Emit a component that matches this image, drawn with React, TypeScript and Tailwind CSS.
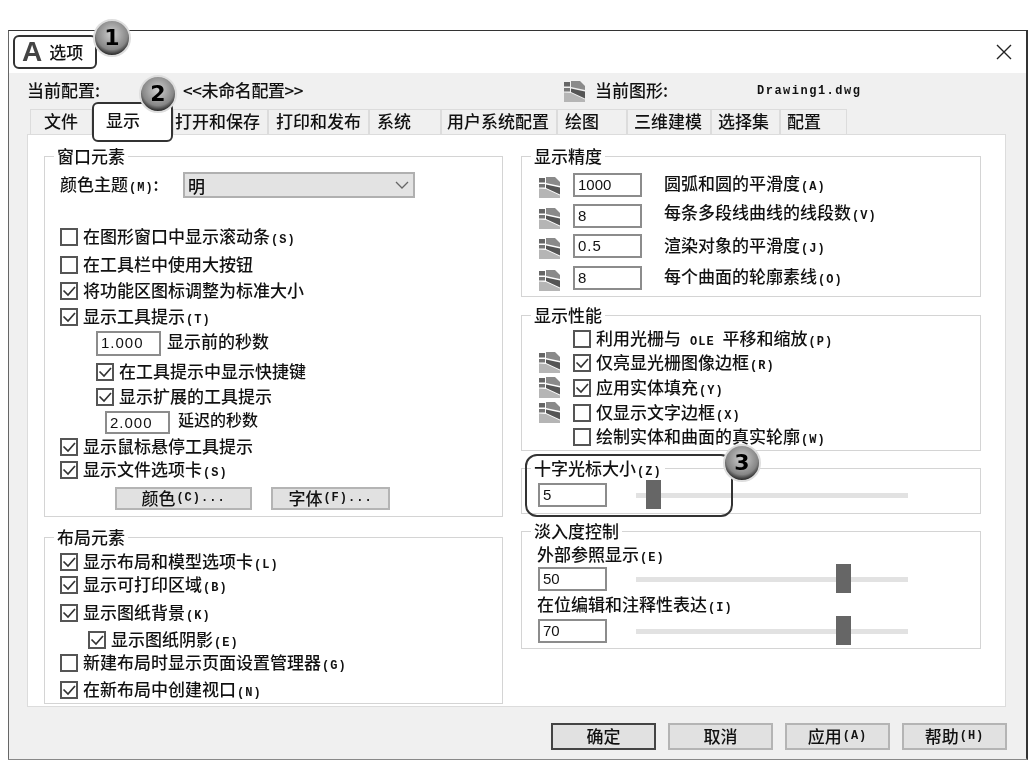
import type { ReactNode } from 'react';

const cjk = "font-['Noto_Sans_CJK_SC','Liberation_Sans',sans-serif]";

function Hot({ children }: { children: ReactNode }) {
  return <span className="font-['Liberation_Mono',monospace] text-[12px] font-bold tracking-[1px] ml-px">{children}</span>;
}

function LayerIcon({ className = '' }: { className?: string }) {
  return (
    <svg viewBox="0 0 21 21" className={`w-[21px] h-[21px] shrink-0 ${className}`}>
      <path d="M0 1h6v4.5H0z" fill="#666" />
      <path d="M7 0h9l5 5v4L7 6z" fill="#8a8a8a" />
      <path d="M0 7h6v3.5H0z" fill="#777" />
      <path d="M7 7.5l14 3v7L7 11z" fill="#555" />
      <path d="M0 11.5l7 .5 14 6.5V21H0z" fill="#b5b5b5" />
    </svg>
  );
}

function Group({ title, className, children }: { title: ReactNode; className: string; children: ReactNode }) {
  return (
    <section className={`relative border border-[#d4d4d4] ${className}`}>
      <span className="absolute -top-[11px] left-[9px] bg-white px-[3px] leading-[20px] whitespace-nowrap">{title}</span>
      {children}
    </section>
  );
}

function Check({ on, className = '', children }: { on?: boolean; className?: string; children: ReactNode }) {
  return (
    <div className={`flex items-center h-[23px] ${className}`}>
      <span className="w-[18px] h-[18px] border-2 border-[#555] bg-white flex items-center justify-center shrink-0">
        {on && (
          <svg viewBox="0 0 14 14" className="w-[14px] h-[14px]">
            <path d="M1.5 6.5l4.5 4.5 7-8" fill="none" stroke="#333" strokeWidth="1.7" />
          </svg>
        )}
      </span>
      <span className="ml-[5px] -mt-[2px] whitespace-nowrap">{children}</span>
    </div>
  );
}

function Field({ value, className }: { value: string; className: string }) {
  return (
    <div className={`border-2 border-[#8c8c8c] bg-white pl-[3px] text-[15px] leading-[20px] font-['Liberation_Sans',sans-serif] shrink-0 ${className}`}>
      {value}
    </div>
  );
}

function Slider({ thumb }: { thumb: string }) {
  return (
    <div className="relative ml-[29px] w-[272px] h-[24px] flex items-center">
      <div className="w-full h-[5px] bg-[#e2e2e2]" />
      <div className={`absolute top-[-3px] w-[15px] h-[29px] bg-[#666] ${thumb}`} />
    </div>
  );
}

function Badge({ n, className }: { n: number; className: string }) {
  return (
    <div className={`absolute z-20 w-[38px] h-[38px] rounded-full border-2 border-[#dedede] bg-[radial-gradient(circle_at_50%_38%,#cfcfcf,#868686_58%,#1c1c1c_80%)] flex items-center justify-center text-[22px] font-bold text-black font-['DejaVu_Sans',sans-serif] leading-none ${className}`}>
      {n}
    </div>
  );
}

function Tab({ w, pl, children }: { w: string; pl: string; children: ReactNode }) {
  return (
    <div className={`${w} ${pl} h-[25px] border border-b-0 border-[#dcdcdc] bg-[#f0f0f0] leading-[22px] whitespace-nowrap`}>
      {children}
    </div>
  );
}

function DlgButton({ children, def }: { children: ReactNode; def?: boolean }) {
  return (
    <div className={`w-[105px] h-[27px] bg-[#e1e1e1] pb-[2px] flex items-center justify-center ${def ? 'border-2 border-[#444]' : 'border-2 border-[#b4b4b4]'}`}>
      {children}
    </div>
  );
}

export default function App() {
  return (
    <div className={`relative w-[1034px] h-[769px] bg-white pt-[30px] pl-[8px] text-[17px] font-medium text-[#111] overflow-hidden blur-[0.75px] ${cjk}`}>
      <div className="relative w-[1020px] h-[730px] border-t border-l border-r-2 border-b-2 border-t-[#333] border-l-[#666] border-r-[#333] border-b-[#888]">
        {/* Title bar */}
        <div className="h-[42px] flex items-center justify-between bg-white">
          <div className="flex items-center ml-[13px]">
            <span className="text-[28px] font-bold leading-none text-[#444] font-['Liberation_Sans',sans-serif]">A</span>
            <span className="ml-[7px] text-[17px]">选项</span>
          </div>
          <svg viewBox="0 0 16 16" className="w-[16px] h-[16px] mr-[14px]">
            <path d="M1 1l14 14M15 1L1 15" stroke="#222" strokeWidth="1.4" />
          </svg>
        </div>

        <div className="h-[686px] bg-[#f0f0f0]">
          {/* Current profile row */}
          <div className="h-[36px] flex items-center pl-[18px]">
            <span className="w-[156px] -mt-[3px]">当前配置:</span>
            <span className="w-[381px] -mt-[3px] whitespace-nowrap tracking-[-0.4px]">&lt;&lt;未命名配置&gt;&gt;</span>
            <LayerIcon />
            <span className="ml-[10px] w-[162px] -mt-[3px]">当前图形:</span>
            <span className="font-['Liberation_Mono',monospace] text-[12px] font-bold tracking-[1.5px] -mt-[1px]">Drawing1.dwg</span>
          </div>

          {/* Tabs */}
          <div className="flex ml-[21px] h-[25px]">
            <Tab w="w-[62px]" pl="pl-[13px]">文件</Tab>
            <div className="relative w-[81px] h-[25px] bg-white">
              <div className="absolute top-[-7px] left-0 w-[81px] h-[40px] pl-[12px] leading-[32px] bg-white border-2 border-[#333] rounded-[6px] z-10">显示</div>
            </div>
            <Tab w="w-[95px]" pl="pl-[1px]">打开和保存</Tab>
            <Tab w="w-[101px]" pl="pl-[7px]">打印和发布</Tab>
            <Tab w="w-[72px]" pl="pl-[7px]">系统</Tab>
            <Tab w="w-[116px]" pl="pl-[5px]">用户系统配置</Tab>
            <Tab w="w-[70px]" pl="pl-[7px]">绘图</Tab>
            <Tab w="w-[84px]" pl="pl-[6px]">三维建模</Tab>
            <Tab w="w-[69px]" pl="pl-[6px]">选择集</Tab>
            <Tab w="w-[67px]" pl="pl-[6px]">配置</Tab>
          </div>

          {/* Tab panel */}
          <div className="ml-[18px] w-[979px] h-[573px] bg-white border border-[#dcdcdc] pt-[21px] pl-[16px] flex gap-[18px]">
            <div className="w-[459px]">
              <Group title="窗口元素" className="h-[361px] pl-[15px]">
                <div className="flex items-center h-[26px] mt-[15px]">
                  <span className="w-[123px] -mt-[2px] whitespace-nowrap">颜色主题<Hot>(M)</Hot>:</span>
                  <div className="w-[232px] h-[26px] bg-[#e3e3e3] border-2 border-[#b0b0b0] pl-[3px] flex items-center justify-between leading-none">
                    <span>明</span>
                    <svg viewBox="0 0 14 8" className="w-[14px] h-[8px] mr-[4px]">
                      <path d="M1 1l6 6 6-6" fill="none" stroke="#666" strokeWidth="1.3" />
                    </svg>
                  </div>
                </div>
                <Check className="mt-[27px]">在图形窗口中显示滚动条<Hot>(S)</Hot></Check>
                <Check className="mt-[5px]">在工具栏中使用大按钮</Check>
                <Check on className="mt-[3px]">将功能区图标调整为标准大小</Check>
                <Check on className="mt-[3px]">显示工具提示<Hot>(T)</Hot></Check>
                <div className="flex items-center h-[25px] mt-[3px] ml-[36px]">
                  <Field value="1.000" className="w-[65px] h-[25px] tracking-[1px]" />
                  <span className="ml-[6px] -mt-[6px]">显示前的秒数</span>
                </div>
                <Check on className="mt-[4px] ml-[36px]">在工具提示中显示快捷键</Check>
                <Check on className="mt-[2px] ml-[36px]">显示扩展的工具提示</Check>
                <div className="flex items-center h-[22px] mt-[3px] ml-[45px]">
                  <Field value="2.000" className="w-[65px] h-[23px] tracking-[1px]" />
                  <span className="ml-[8px] text-[16px] -mt-[6px]">延迟的秒数</span>
                </div>
                <Check on className="mt-[2px]">显示鼠标悬停工具提示</Check>
                <Check on>显示文件选项卡<Hot>(S)</Hot></Check>
                <div className="flex mt-[6px] ml-[55px] gap-[19px]">
                  <div className="w-[137px] h-[23px] pb-[2px] bg-[#e1e1e1] border-2 border-[#b4b4b4] flex items-center justify-center">颜色<Hot>(C)...</Hot></div>
                  <div className="w-[119px] h-[23px] pb-[2px] bg-[#e1e1e1] border-2 border-[#b4b4b4] flex items-center justify-center">字体<Hot>(F)...</Hot></div>
                </div>
              </Group>
              <Group title="布局元素" className="mt-[20px] h-[167px] pl-[15px]">
                <Check on className="mt-[12px]">显示布局和模型选项卡<Hot>(L)</Hot></Check>
                <Check on>显示可打印区域<Hot>(B)</Hot></Check>
                <Check on className="mt-[5px]">显示图纸背景<Hot>(K)</Hot></Check>
                <Check on className="mt-[4px] ml-[28px]">显示图纸阴影<Hot>(E)</Hot></Check>
                <Check>新建布局时显示页面设置管理器<Hot>(G)</Hot></Check>
                <Check on className="mt-[4px]">在新布局中创建视口<Hot>(N)</Hot></Check>
              </Group>
            </div>

            <div className="w-[460px]">
              <Group title="显示精度" className="h-[141px] pl-[17px]">
                <div className="flex items-center h-[24px] mt-[16px]">
                  <LayerIcon className="mt-[4px]" />
                  <Field value="1000" className="w-[69px] h-[24px] ml-[13px]" />
                  <span className="ml-[22px] -mt-[4px]">圆弧和圆的平滑度<Hot>(A)</Hot></span>
                </div>
                <div className="flex items-center h-[24px] mt-[7px]">
                  <LayerIcon className="mt-[4px]" />
                  <Field value="8" className="w-[69px] h-[24px] ml-[13px]" />
                  <span className="ml-[22px] -mt-[8px]">每条多段线曲线的线段数<Hot>(V)</Hot></span>
                </div>
                <div className="flex items-center h-[24px] mt-[6px]">
                  <LayerIcon className="mt-[4px]" />
                  <Field value="0.5" className="w-[69px] h-[24px] ml-[13px] tracking-[1px]" />
                  <span className="ml-[22px] -mt-[2px]">渲染对象的平滑度<Hot>(J)</Hot></span>
                </div>
                <div className="flex items-center h-[24px] mt-[8px]">
                  <LayerIcon className="mt-[4px]" />
                  <Field value="8" className="w-[69px] h-[24px] ml-[13px]" />
                  <span className="ml-[22px] -mt-[4px]">每个曲面的轮廓素线<Hot>(O)</Hot></span>
                </div>
              </Group>

              <Group title="显示性能" className="mt-[18px] h-[136px] pl-[17px]">
                <Check className="mt-[11px] ml-[34px]">利用光栅与<span className="mx-[8px]"><Hot>OLE</Hot></span>平移和缩放<Hot>(P)</Hot></Check>
                <div className="flex items-center mt-[1px]">
                  <LayerIcon />
                  <Check on className="ml-[13px]">仅亮显光栅图像边框<Hot>(R)</Hot></Check>
                </div>
                <div className="flex items-center mt-[2px]">
                  <LayerIcon />
                  <Check on className="ml-[13px]">应用实体填充<Hot>(Y)</Hot></Check>
                </div>
                <div className="flex items-center mt-[2px]">
                  <LayerIcon />
                  <Check className="ml-[13px]">仅显示文字边框<Hot>(X)</Hot></Check>
                </div>
                <Check className="mt-[1px] ml-[34px]">绘制实体和曲面的真实轮廓<Hot>(W)</Hot></Check>
              </Group>

              <Group title={<>十字光标大小<Hot>(Z)</Hot></>} className="mt-[17px] h-[46px] pl-[16px]">
                <div className="flex items-center mt-[14px]">
                  <Field value="5" className="w-[69px] h-[24px]" />
                  <Slider thumb="left-[10px]" />
                </div>
              </Group>

              <Group title="淡入度控制" className="mt-[17px] h-[118px] pl-[16px]">
                <div className="h-[24px] mt-[10px] -ml-px leading-[24px]">外部参照显示<Hot>(E)</Hot></div>
                <div className="flex items-center mt-[1px]">
                  <Field value="50" className="w-[69px] h-[24px]" />
                  <Slider thumb="left-[200px]" />
                </div>
                <div className="h-[24px] mt-[1px] -ml-px leading-[24px]">在位编辑和注释性表达<Hot>(I)</Hot></div>
                <div className="flex items-center mt-[3px]">
                  <Field value="70" className="w-[69px] h-[24px]" />
                  <Slider thumb="left-[200px]" />
                </div>
              </Group>
            </div>
          </div>

          {/* Bottom buttons */}
          <div className="flex justify-end gap-[12px] mt-[16px] mr-[19px]">
            <DlgButton def>确定</DlgButton>
            <DlgButton>取消</DlgButton>
            <DlgButton>应用<Hot>(A)</Hot></DlgButton>
            <DlgButton>帮助<Hot>(H)</Hot></DlgButton>
          </div>
        </div>
      </div>

      {/* Callouts over the dialog */}
      <div className="absolute left-[13px] top-[35px] w-[84px] h-[34px] border-2 border-[#333] rounded-[6px]" />
      <div className="absolute left-[525px] top-[454px] w-[208px] h-[63px] border-2 border-[#333] rounded-[12px]" />
      <Badge n={1} className="left-[93px] top-[19px]" />
      <Badge n={2} className="left-[139px] top-[75px]" />
      <Badge n={3} className="left-[723px] top-[444px]" />
    </div>
  );
}
